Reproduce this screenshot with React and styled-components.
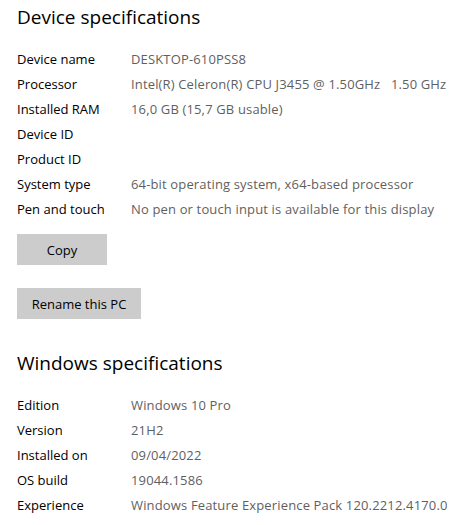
import React from "react";
import styled, { createGlobalStyle } from "styled-components";

const Global = createGlobalStyle`
  html, body { margin: 0; padding: 0; background: #fff; }
  body { font-family: "Open Sans", "Noto Sans", sans-serif; color: #000; }
`;

const Page = styled.div`
  width: 470px;
  height: 525px;
  overflow: hidden;
  padding: 0 0 0 17px;
  box-sizing: border-box;
  display: flex;
  flex-direction: column;
`;

const Title = styled.h2`
  margin: ${(p) => p.$top}px 0 0 0;
  font-size: 19px;
  font-weight: 400;
  line-height: 28px;
  color: #000;
`;

const Specs = styled.div`
  display: grid;
  grid-template-columns: 114px auto;
  grid-auto-rows: 25px;
  margin-top: ${(p) => p.$top}px;
  font-size: 13px;
  align-items: center;
  white-space: nowrap;
`;

const Label = styled.div`
  color: #000;
`;

const Value = styled.div`
  color: #5f5f5f;
  white-space: pre;
  letter-spacing: 0.15px;
`;

const Button = styled.button`
  align-self: flex-start;
  margin-top: ${(p) => p.$top}px;
  width: ${(p) => p.$w}px;
  height: 31px;
  border: none;
  background: #cccccc;
  font-family: inherit;
  font-size: 13px;
  color: #000;
  padding: 0;
`;

const device = [
  ["Device name", "DESKTOP-610PSS8"],
  ["Processor", "Intel(R) Celeron(R) CPU J3455 @ 1.50GHz   1.50 GHz"],
  ["Installed RAM", "16,0 GB (15,7 GB usable)"],
  ["Device ID", ""],
  ["Product ID", ""],
  ["System type", "64-bit operating system, x64-based processor"],
  ["Pen and touch", "No pen or touch input is available for this display"],
];

const windows = [
  ["Edition", "Windows 10 Pro"],
  ["Version", "21H2"],
  ["Installed on", "09/04/2022"],
  ["OS build", "19044.1586"],
  ["Experience", "Windows Feature Experience Pack 120.2212.4170.0"],
];

const SpecList = ({ rows, top }) => (
  <Specs $top={top}>
    {rows.map(([l, v]) => (
      <React.Fragment key={l}>
        <Label>{l}</Label>
        <Value>{v}</Value>
      </React.Fragment>
    ))}
  </Specs>
);

export default function App() {
  return (
    <>
      <Global />
      <Page>
        <Title $top={3}>Device specifications</Title>
        <SpecList rows={device} top={15} />
        <Button $top={13} $w={90}>Copy</Button>
        <Button $top={23} $w={124}>Rename this PC</Button>
        <Title $top={30}>Windows specifications</Title>
        <SpecList rows={windows} top={15} />
      </Page>
    </>
  );
}
